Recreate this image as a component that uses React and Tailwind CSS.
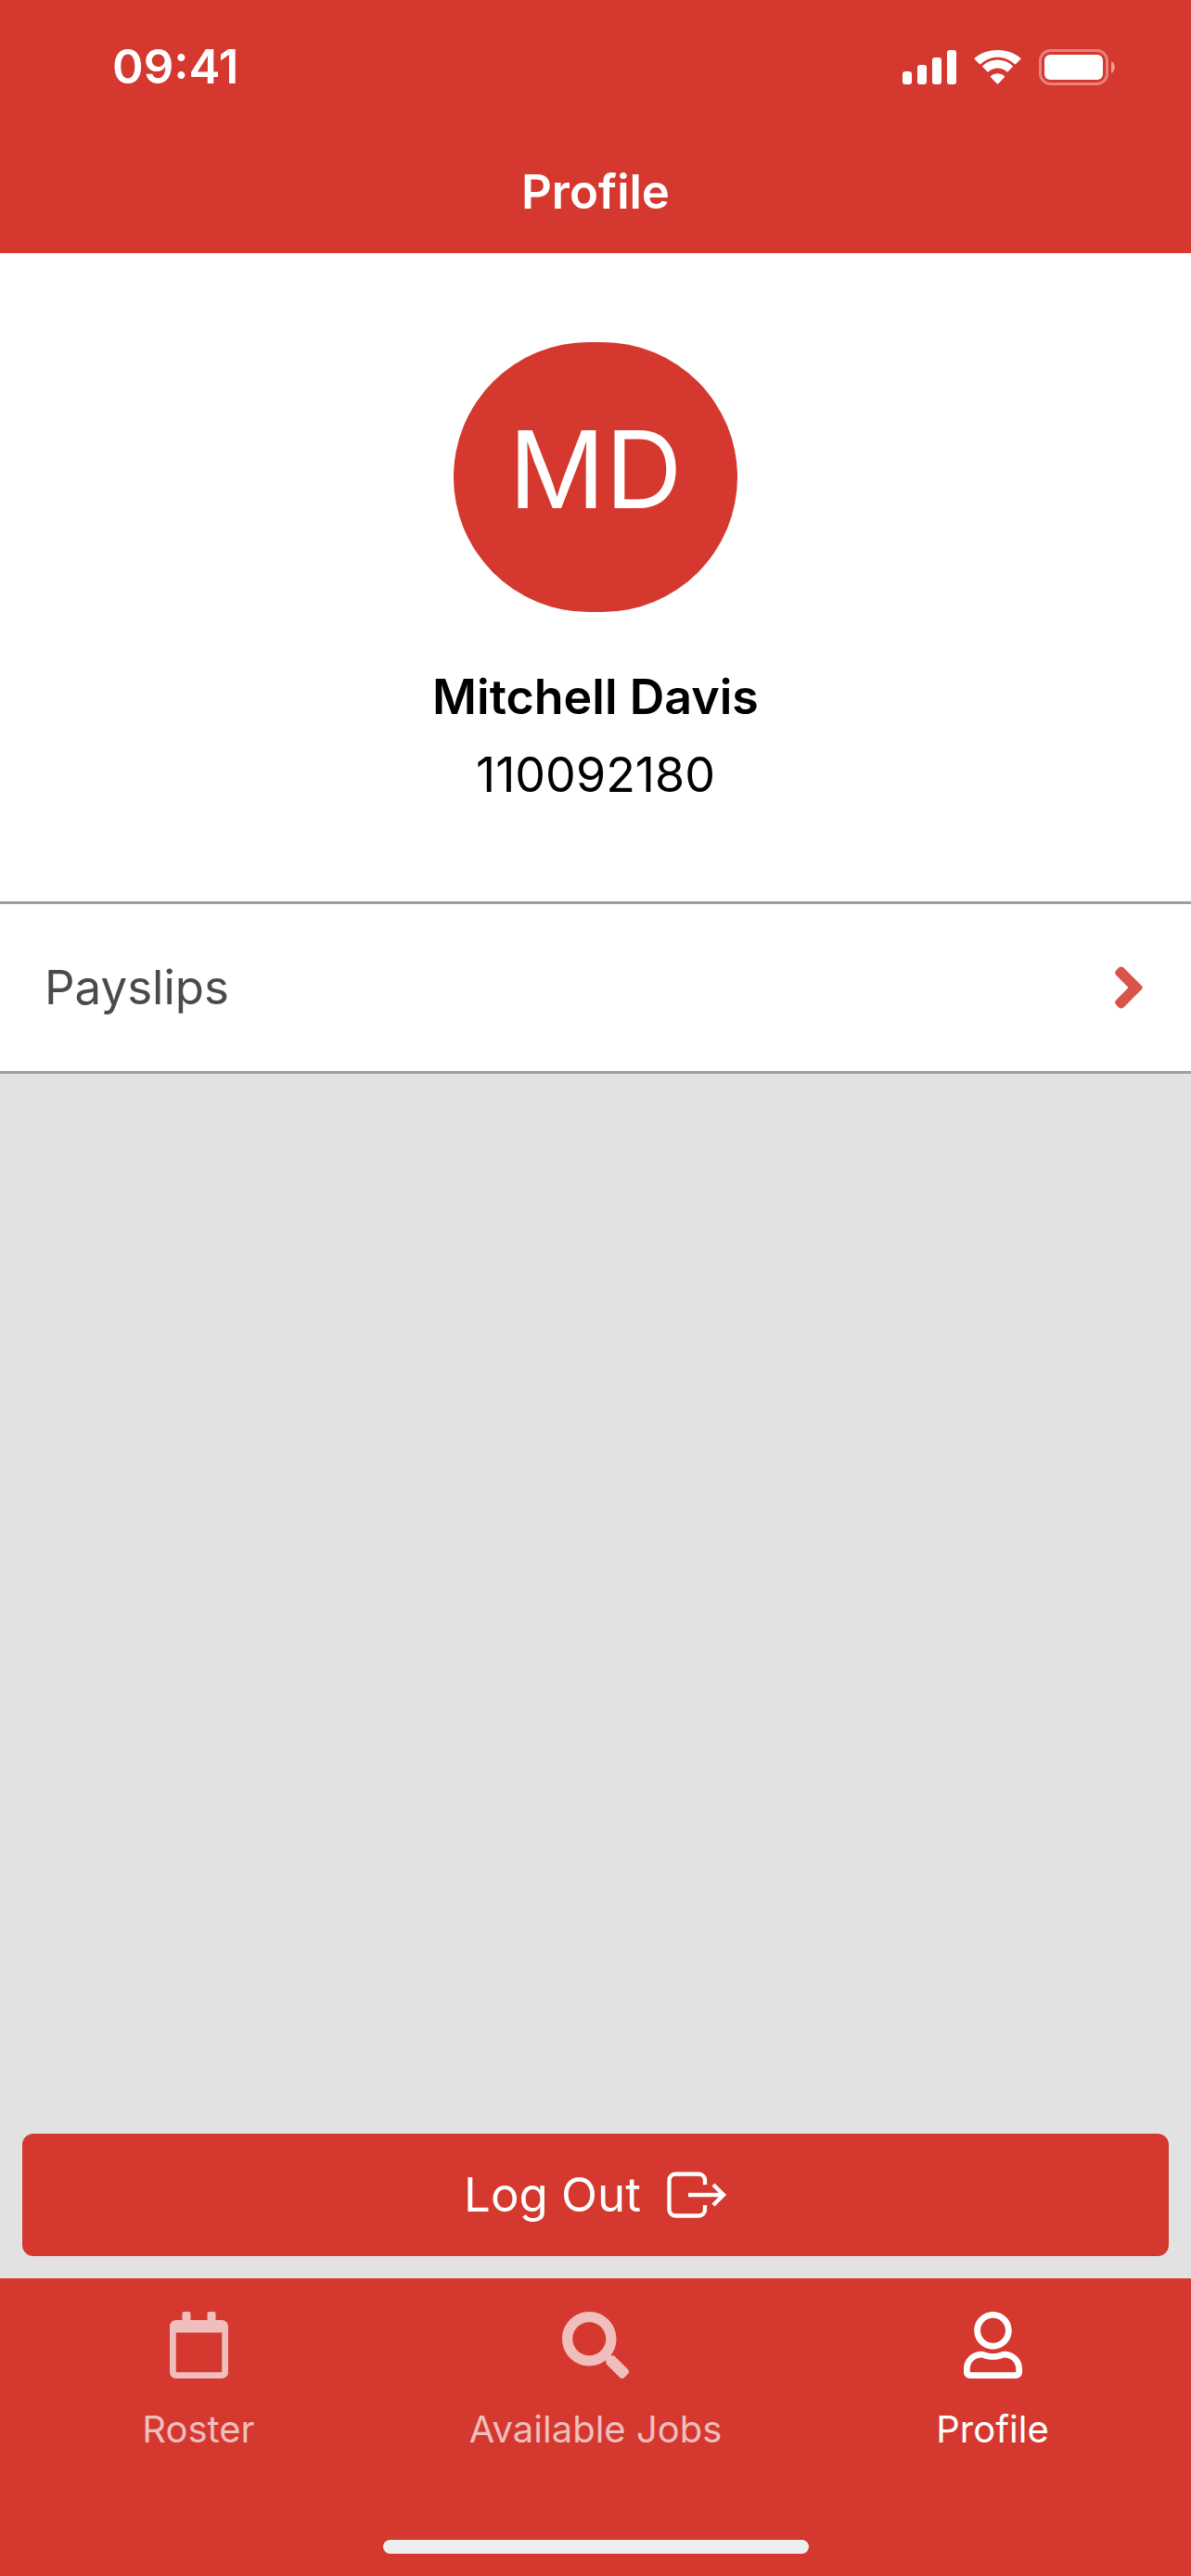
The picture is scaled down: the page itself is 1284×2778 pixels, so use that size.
// ============================================
// Profile screen
// ============================================

const user = {
  name: 'Mitchell Davis',
  initials: 'MD',
  employeeId: '110092180',
};

const tabs = [
  { label: 'Roster', Icon: CalendarIcon, active: false },
  { label: 'Available Jobs', Icon: SearchIcon, active: false },
  { label: 'Profile', Icon: UserIcon, active: true },
];

export default function App() {
  return (
    <div className="min-h-screen flex flex-col bg-[#e2e2e2] font-['Inter','Liberation_Sans',sans-serif]">
      <header className="bg-[#d5382e] text-white pb-1">
        <StatusBar />
        <h1 className="h-[125px] flex items-center justify-center text-[51px] leading-[60px] font-semibold">
          Profile
        </h1>
      </header>

      <main className="flex-1 flex flex-col">
        <section className="bg-white flex flex-col items-center pt-24 pb-[94px]">
          <div className="w-[306px] h-[291px] pb-4 rounded-full bg-[#d5382e] text-white flex items-center justify-center text-[115px] leading-none">
            {user.initials}
          </div>
          <h2 className="mt-[50px] text-[52px] leading-[84px] font-semibold text-black">{user.name}</h2>
          <p className="text-[52px] leading-[84px] text-black">{user.employeeId}</p>
        </section>

        <a
          href="#payslips"
          className="h-[186px] bg-white border-y-[3px] border-[#9e9e9e] pl-12 pr-[52px] flex items-center justify-between text-[51px] text-[#4a4a4a]"
        >
          Payslips
          <ChevronIcon />
        </a>

        <div className="flex-1 flex flex-col justify-end p-6">
          <button
            type="button"
            className="h-[132px] rounded-xl bg-[#d5382e] text-white text-[51px] flex items-center justify-center gap-7"
          >
            Log Out
            <LogoutIcon />
          </button>
        </div>
      </main>

      <footer className="bg-[#d5382e] pt-9 pb-6">
        <nav className="grid grid-cols-3">
          {tabs.map((tab) => (
            <TabItem key={tab.label} {...tab} />
          ))}
        </nav>
        <div className="mt-[88px] mx-auto w-[459px] h-[15px] rounded-full bg-[#eeeeee]" />
      </footer>
    </div>
  );
}

function StatusBar() {
  return (
    <div className="h-[144px] pl-[121px] pr-[82px] flex items-center justify-between">
      <span className="text-[51px] leading-[60px] font-semibold">09:41</span>
      <div className="flex items-center gap-[19px]">
        <SignalIcon />
        <WifiIcon />
        <BatteryIcon />
      </div>
    </div>
  );
}

function TabItem({ label, Icon, active }) {
  return (
    <a
      href={`#${label.toLowerCase().replace(' ', '-')}`}
      aria-current={active ? 'page' : undefined}
      className={`flex flex-col items-center gap-6 text-[40px] leading-[62px] ${
        active ? 'text-white' : 'text-[#efbebd]'
      }`}
    >
      <Icon />
      {label}
    </a>
  );
}

/* Icons */

function SignalIcon() {
  return (
    <svg width="58" height="38" viewBox="0 0 58 38" fill="currentColor">
      <rect x="0" y="24" width="10" height="14" rx="3" />
      <rect x="16" y="17" width="10" height="21" rx="3" />
      <rect x="32" y="9" width="10" height="29" rx="3" />
      <rect x="48" y="1" width="10" height="37" rx="3" />
    </svg>
  );
}

function WifiIcon() {
  return (
    <svg width="51" height="38" viewBox="0 0 51 38" fill="currentColor">
      <path d="M25.5 8.7c6.8 0 13.300 2.600 18.200 7.300.4.4 1 .4 1.400 0l5-5c.5-.5.5-1.200 0-1.600C36.500-1.800 14.500-1.800.9 9.400c-.5.4-.5 1.100 0 1.600l5 5c.4.4 1 .4 1.400 0C12.200 11.300 18.700 8.700 25.500 8.700z" />
      <path d="M25.500 20.500c3.600 0 7 1.300 9.700 3.700.4.4 1 .4 1.400 0l4.900-4.900c.4-.4.4-1 0-1.500-9-8.400-23-8.400-32 0-.4.5-.4 1.100 0 1.500l4.900 4.900c.4.4 1 .4 1.400 0 2.700-2.400 6.100-3.700 9.700-3.700z" />
      <path d="M32.900 28.900c.4.400.4 1 0 1.400l-6.700 6.900c-.4.4-1 .4-1.400 0l-6.700-6.900c-.4-.4-.4-1 0-1.400 4.300-3.600 10.500-3.600 14.800 0z" />
    </svg>
  );
}

function BatteryIcon() {
  return (
    <svg width="82" height="39" viewBox="0 0 82 39" fill="currentColor">
      <rect x="1.500" y="1.500" width="72" height="36" rx="11" fill="none" stroke="currentColor" strokeWidth="3" opacity="0.38" />
      <rect x="6" y="6" width="63" height="27" rx="6" />
      <path d="M78 13c5 2 5 11 0 13z" opacity="0.5" />
    </svg>
  );
}

function ChevronIcon() {
  return (
    <svg width="30" height="46" viewBox="0 0 30 46" fill="#d95348">
      <path d="M29 21.300L9.300 1.400c-1.300-1.300-3.900-1.300-5.200 0L1.200 4.500c-1.400 1.400-1.400 3.600 0 5L14.500 23 1.200 36.500c-1.400 1.400-1.400 3.600 0 5l2.900 3.100c1.300 1.300 3.900 1.300 5.200 0L29 24.700c1-1 1-2.400 0-3.400z" />
    </svg>
  );
}

function LogoutIcon() {
  return (
    <svg width="65" height="50" viewBox="0 0 65 50" fill="none" stroke="currentColor" strokeWidth="4.300">
      <path d="M41 14V9a6.500 6.500 0 0 0-6.500-6.500h-25.500A6.500 6.500 0 0 0 2.500 9v32a6.500 6.500 0 0 0 6.500 6.500h25.500A6.500 6.500 0 0 0 41 41v-5" />
      <path d="M23 25h38M50 14l11 11-11 11" />
    </svg>
  );
}

function CalendarIcon() {
  return (
    <svg width="63" height="72" viewBox="0 0 448 512" fill="currentColor">
      <path
        fillRule="evenodd"
        d="M400 64h-48V12c0-6.600-5.400-12-12-12h-40c-6.600 0-12 5.400-12 12v52H160V12c0-6.600-5.400-12-12-12h-40c-6.600 0-12 5.400-12 12v52H48C21.500 64 0 85.500 0 112v352c0 26.500 21.500 48 48 48h352c26.500 0 48-21.500 48-48V112c0-26.500-21.500-48-48-48zM48 160h352v298c0 3.300-2.700 6-6 6H54c-3.300 0-6-2.700-6-6z"
      />
    </svg>
  );
}

function SearchIcon() {
  return (
    <svg width="72" height="72" viewBox="0 0 512 512" fill="currentColor">
      <path d="M505 442.700L405.300 343c-4.500-4.500-10.600-7-17-7H372c27.600-35.300 44-79.700 44-128C416 93.100 322.900 0 208 0S0 93.100 0 208s93.100 208 208 208c48.300 0 92.700-16.400 128-44v16.300c0 6.400 2.500 12.500 7 17l99.700 99.700c9.400 9.400 24.600 9.400 33.900 0l28.300-28.300c9.400-9.400 9.400-24.600.1-34zM208 336c-70.700 0-128-57.200-128-128 0-70.700 57.200-128 128-128 70.700 0 128 57.200 128 128 0 70.700-57.200 128-128 128z" />
    </svg>
  );
}

function UserIcon() {
  return (
    <svg width="63" height="72" viewBox="0 0 448 512" fill="currentColor">
      <path d="M313.600 304c-28.700 0-42.500 16-89.600 16-47.100 0-60.800-16-89.600-16C60.200 304 0 364.200 0 438.400V464c0 26.500 21.500 48 48 48h352c26.500 0 48-21.500 48-48v-25.600c0-74.200-60.200-134.400-134.400-134.400zM400 464H48v-25.600c0-47.600 38.800-86.400 86.400-86.400 14.600 0 38.300 16 89.600 16 51.700 0 74.900-16 89.600-16 47.600 0 86.400 38.800 86.400 86.400V464zM224 288c79.500 0 144-64.500 144-144S303.500 0 224 0 80 64.500 80 144s64.500 144 144 144zm0-240c52.900 0 96 43.100 96 96s-43.100 96-96 96-96-43.100-96-96 43.100-96 96-96z" />
    </svg>
  );
}
